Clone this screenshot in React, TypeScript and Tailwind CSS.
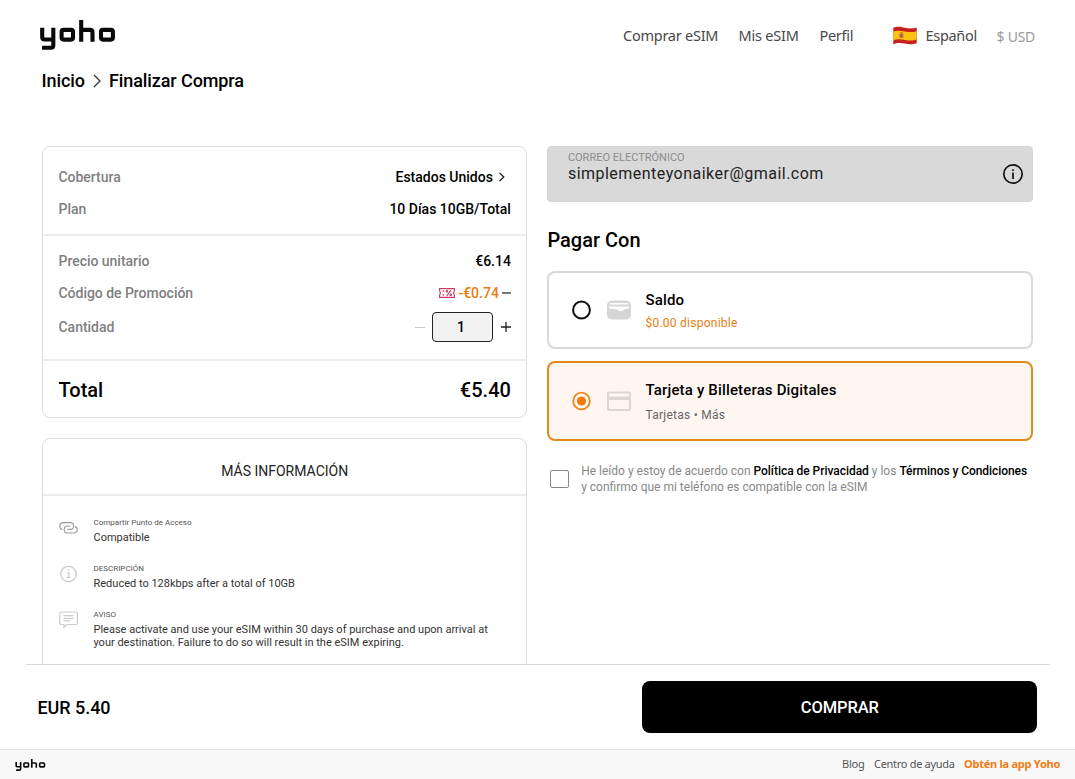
import type { ReactNode } from "react";

function Logo({ className }: { className: string }) {
  return (
    <svg viewBox="0 0 76 30" className={className} fill="none" stroke="#0a0a0a" strokeWidth="4.1" strokeLinejoin="round">
      <path d="M2.2 7.8V17Q2.2 19.5 4.7 19.5H13.3M13.3 7.8V25.2Q13.3 27.7 10.8 27.7H2" />
      <rect x="21.6" y="9.9" width="11.4" height="9.7" rx="2" />
      <path d="M41.2 0V21.7M41.2 9.9H50Q52.5 9.9 52.5 12.4V21.7" />
      <rect x="61" y="9.9" width="11.9" height="9.7" rx="2" />
    </svg>
  );
}

function Flag() {
  return (
    <svg viewBox="0 0 24 20" className="-mt-px h-5 w-6">
      <path d="M0.3 1.8C5-.1 8 1 12 1.8S19 2.8 23.7 1.6V17.2C19 18.7 16 18.2 12 17.6S5 16.4.3 18.2Z" fill="#c8201c" />
      <path d="M.3 5.6C5 3.9 8 4.8 12 5.5S19 6.4 23.7 5.2V13.5C19 15 16 14.5 12 13.9S5 12.7.3 14.4Z" fill="#fcc314" />
      <path d="M5.9 7.3h.9v5H5.9zM10 7.5h.8v5H10z" fill="#c79a4a" />
      <path d="M7.2 7.8h2.5v3.2q-1.2 1.8-2.5 0zM7.4 6.2h2.1v1H7.4z" fill="#a8553a" />
    </svg>
  );
}

function Row({ label, h, children }: { label: string; h: string; children: ReactNode }) {
  return (
    <div className={`flex items-center justify-between ${h}`}>
      <span className="text-[14px] font-medium tracking-[-0.03px] text-[#808080]">{label}</span>
      <div className="flex items-center text-[14px] font-medium text-black">{children}</div>
    </div>
  );
}

function Ticket() {
  return (
    <svg viewBox="0 0 16 10" className="mr-[3px] h-2.5 w-4" fill="none" stroke="#cf3a63" strokeWidth="1.1">
      <path d="M.6.6H15.4V3Q13.8 5 15.4 7V9.4H.6V7Q2.2 5 .6 3Z" />
      <path d="M4.2 2.2V4M4.2 6V7.8M12 2.2L7.8 7.8" />
      <circle cx="8" cy="3.3" r=".8" />
      <circle cx="11.8" cy="6.8" r=".8" />
    </svg>
  );
}

function Info({ icon, label, children }: { icon: ReactNode; label: string; children: ReactNode }) {
  return (
    <div className="flex h-[46px]">
      <div className="w-[34.5px] shrink-0">{icon}</div>
      <div>
        <div className="h-[13px] text-[8px] leading-[10px] text-[#555]">{label}</div>
        <div className="text-[11px] leading-[13px] text-[#333]">{children}</div>
      </div>
    </div>
  );
}

export default function App() {
  return (
    <div className="flex h-[779px] w-[1075px] flex-col overflow-hidden bg-white font-['Roboto',sans-serif] text-black">
      <header className="flex h-[60px] shrink-0 items-start justify-between pr-[39.5px] pl-10">
        <Logo className="mt-5 h-[30px] w-[76px]" />
        <nav className="mt-[26px] flex h-5 items-center font-['Noto_Sans','Open_Sans',sans-serif] text-[14.5px] text-[#484848]">
          <span className="mr-5 w-[95.5px] whitespace-nowrap tracking-[-0.25px]">Comprar eSIM</span>
          <span className="mr-5 w-[61px] whitespace-nowrap tracking-[-0.2px]">Mis eSIM</span>
          <span className="mr-[39px] w-[34px] whitespace-nowrap tracking-[-0.3px]">Perfil</span>
          <Flag />
          <span className="ml-[9px] w-[52px] whitespace-nowrap tracking-[-0.3px]">Español</span>
          <span className="ml-[19px] w-[39px] whitespace-nowrap text-[14px] tracking-[-0.25px] text-[#999]">$ USD</span>
        </nav>
      </header>

      <div className="flex h-[86px] shrink-0 items-start pt-[8px] pl-[41.5px]">
        <div className="flex h-6 items-center text-[18px] font-medium tracking-[-0.09px]">
          <span>Inicio</span>
          <svg viewBox="0 0 10 16" className="mx-[7px] mt-px h-4 w-[10px]" fill="none" stroke="#333" strokeWidth="1.3">
            <path d="M2 2L8 8L2 14" />
          </svg>
          <span>Finalizar Compra</span>
        </div>
      </div>

      <main className="flex min-h-0 flex-1 items-start gap-5 overflow-hidden pl-[42px]">
        <div className="w-[485.4px]">
          <section className="rounded-lg border border-[#ddd]">
            <div className="border-b-2 border-[#ececec] px-[15.5px] pt-[14px] pb-[9px]">
              <Row label="Cobertura" h="h-8">
                <span>Estados Unidos</span>
                <svg viewBox="0 0 8 10" className="mr-[5px] ml-[5px] h-[10px] w-2" fill="none" stroke="#222" strokeWidth="1.3">
                  <path d="M1.5 1L5.8 5L1.5 9" />
                </svg>
              </Row>
              <Row label="Plan" h="h-8">10 Días 10GB/Total</Row>
            </div>
            <div className="border-b-2 border-[#ececec] px-[15.5px] pt-[9px] pb-[14px]">
              <Row label="Precio unitario" h="h-8">€6.14</Row>
              <Row label="Código de Promoción" h="h-8">
                <Ticket />
                <span className="text-[#e87d0d]">-€0.74</span>
                <span className="ml-[3px] h-[1.5px] w-[9px] bg-[#777]" />
              </Row>
              <Row label="Cantidad" h="h-9">
                <span className="mr-[7px] h-[1px] w-[10px] bg-[#ccc]" />
                <span className="flex h-[30px] w-[61px] items-center justify-center rounded border border-[#222] bg-[#f2f2f2] pr-[4px]">1</span>
                <svg viewBox="0 0 10 10" className="-mr-[0.6px] ml-2 h-[10px] w-[10px]" stroke="#222" strokeWidth="1.3">
                  <path d="M0 5H10M5 0V10" />
                </svg>
              </Row>
            </div>
            <div className="flex h-[56px] items-center justify-between px-[15.5px] pt-[2px] text-[20px] font-medium">
              <span>Total</span>
              <span>€5.40</span>
            </div>
          </section>

          <section className="mt-5 h-[300px] rounded-lg border border-[#ddd]">
            <h2 className="flex h-[57px] items-center justify-center border-b-2 border-[#ececec] pt-[10px] text-[14px] text-[#222]">MÁS INFORMACIÓN</h2>
            <div className="px-[16px] pt-[22px]">
              <Info
                label="Compartir Punto de Acceso"
                icon={
                  <svg viewBox="0 0 20 14" className="mt-[3px] h-[14px] w-5" fill="none" stroke="#999" strokeWidth="1.1">
                    <path d="M3.4 8.6Q.8 8 .8 5.2Q.8 1.6 4.6 1.6H11.2Q14.6 1.6 14.6 5Q14.6 8.4 11.2 8.4H8.4" />
                    <path d="M16 5.6Q18.2 6.2 18.2 8.8Q18.2 12 15 12H8.6Q5.2 12 5.2 8.6Q5.2 5 8.6 5H11.4" />
                  </svg>
                }
              >
                Compatible
              </Info>
              <Info
                label="DESCRIPCIÓN"
                icon={
                  <svg viewBox="0 0 20 20" className="h-5 w-5" fill="none" stroke="#ccc" strokeWidth="1.3">
                    <circle cx="9.5" cy="10" r="7.7" />
                    <path d="M8.2 8.8H9.8V13.3M7.9 13.3H11.5M9.5 5.6V7" />
                  </svg>
                }
              >
                Reduced to 128kbps after a total of 10GB
              </Info>
              <Info
                label="AVISO"
                icon={
                  <svg viewBox="0 0 20 20" className="h-5 w-5" fill="none" stroke="#ccc" strokeWidth="1.2">
                    <path d="M2.5 2H17Q18.4 2 18.4 3.4V13Q18.4 14.5 17 14.5H8L5 17.5V14.5H2.5Q.8 14.5 .8 13V3.4Q.8 2 2.5 2Z" />
                    <path d="M4.5 5.7H14.5M4.5 8.3H14.5M4.5 10.9H11" />
                  </svg>
                }
              >
                <span className="whitespace-nowrap">Please activate and use your eSIM within 30 days of purchase and upon arrival at</span>
                <br />
                <span className="whitespace-nowrap">your destination. Failure to do so will result in the eSIM expiring.</span>
              </Info>
            </div>
          </section>
        </div>

        <div className="w-[486px]">
          <div className="flex h-[56px] items-start justify-between rounded border border-[#d4d4d4] bg-[#d9d9d9] pr-[8px] pl-[19.5px]">
            <div>
              <div className="mt-[4px] text-[11px] leading-[13px] text-[#8c8c8c]">CORREO ELECTRÓNICO</div>
              <div className="text-[16px] leading-[19px] tracking-[0.48px] text-[#222]">simplementeyonaiker@gmail.com</div>
            </div>
            <svg viewBox="0 0 22 22" className="mt-4 h-[22px] w-[22px]" fill="none" stroke="#111" strokeWidth="1.7">
              <circle cx="11" cy="11" r="9.2" />
              <path d="M11 9.6V16M11 6.2V8" />
            </svg>
          </div>
          <h1 className="mt-[26px] h-[24px] text-[20px] leading-[24px] font-medium">Pagar Con</h1>
          <div className="mt-[19px] flex h-[78px] items-center rounded-lg border-2 border-[#d9d9d9] pl-[21.9px]">
            <svg viewBox="0 0 20 20" className="h-5 w-5" fill="none" stroke="#111" strokeWidth="2">
              <circle cx="10.5" cy="10" r="8.4" />
            </svg>
            <svg viewBox="0 0 24 20" className="ml-[16px] h-5 w-6">
              <rect x="0" y="0.5" width="24" height="19" rx="5" fill="#d5d5d5" />
              <path d="M2 4.4Q2.8 3 4 3H20Q21.2 3 22 4.4ZM2 6.4H22V8.6Q18 8.4 16 10.4Q13.5 12.4 10.5 10Q8.5 8.6 2 8.4Z" fill="#fff" />
            </svg>
            <div className="ml-[14.2px]">
              <div className="text-[15px] leading-5 font-medium tracking-[0.15px]">Saldo</div>
              <div className="mt-[5px] -mb-px text-[12px] leading-4 tracking-[0.25px] text-[#e87d0d]">$0.00 disponible</div>
            </div>
          </div>
          <div className="mt-3 flex h-[80px] items-center rounded-lg border-2 border-[#e38a1c] bg-[#fff6f2] pl-[21.9px]">
            <svg viewBox="0 0 20 20" className="h-5 w-5" fill="none" stroke="#e8861c" strokeWidth="1.8">
              <circle cx="10.5" cy="10" r="8.3" />
              <circle cx="10.5" cy="10" r="4.6" fill="#f07d08" stroke="none" />
            </svg>
            <svg viewBox="0 0 24 20" className="ml-[16px] h-5 w-6" fill="none" stroke="#dcd5d2" strokeWidth="2">
              <rect x="1" y="1.5" width="22" height="17.5" rx="1" />
              <path d="M1 7.3H23" strokeWidth="3.5" />
            </svg>
            <div className="ml-[14.2px]">
              <div className="text-[15px] leading-5 font-medium tracking-[0.16px]">Tarjeta y Billeteras Digitales</div>
              <div className="mt-[7px] -mb-px text-[12px] leading-4 tracking-[0.25px] text-[#666]">Tarjetas • Más</div>
            </div>
          </div>
          <div className="mt-[22px] flex items-start pl-[2.8px]">
            <span className="mt-[7px] h-[18px] w-[19px] shrink-0 rounded-[2px] border border-[#888]" />
            <p className="ml-3 text-[12px] leading-4 whitespace-nowrap text-[#888]">
              He leído y estoy de acuerdo con <span className="font-medium tracking-[-0.04px] text-black">Política de Privacidad</span> y los{" "}
              <span className="font-medium tracking-[-0.06px] text-black">Términos y Condiciones</span>
              <br />y confirmo que mi teléfono es compatible con la eSIM
            </p>
          </div>
        </div>
      </main>

      <div className="mr-[25px] ml-[26px] flex h-[85px] shrink-0 items-center justify-between border-t border-[#d6d6d6] pr-[12.6px] pl-[11.5px]">
        <span className="text-[18px] font-medium tracking-[-0.05px]">EUR 5.40</span>
        <button className="h-[52px] w-[395.2px] rounded-lg bg-black pt-[2px] text-[16.5px] font-medium tracking-[-0.1px] text-white">COMPRAR</button>
      </div>

      <footer className="flex h-[30px] shrink-0 items-center justify-between border-t border-[#e4e4e4] bg-[#f8f8f8] pr-[15px] pl-[15px]">
        <Logo className="mt-px h-3 w-[31px]" />
        <div className="flex font-['Noto_Sans','Open_Sans',sans-serif] text-[11px] whitespace-nowrap text-[#555]">
          <span className="mr-[10px] w-[22px] tracking-[-0.2px]">Blog</span>
          <span className="mr-[9px] w-[81px] tracking-[-0.3px]">Centro de ayuda</span>
          <span className="w-[96px] font-bold tracking-[-0.25px] text-[#f07d14]">Obtén la app Yoho</span>
        </div>
      </footer>
    </div>
  );
}
